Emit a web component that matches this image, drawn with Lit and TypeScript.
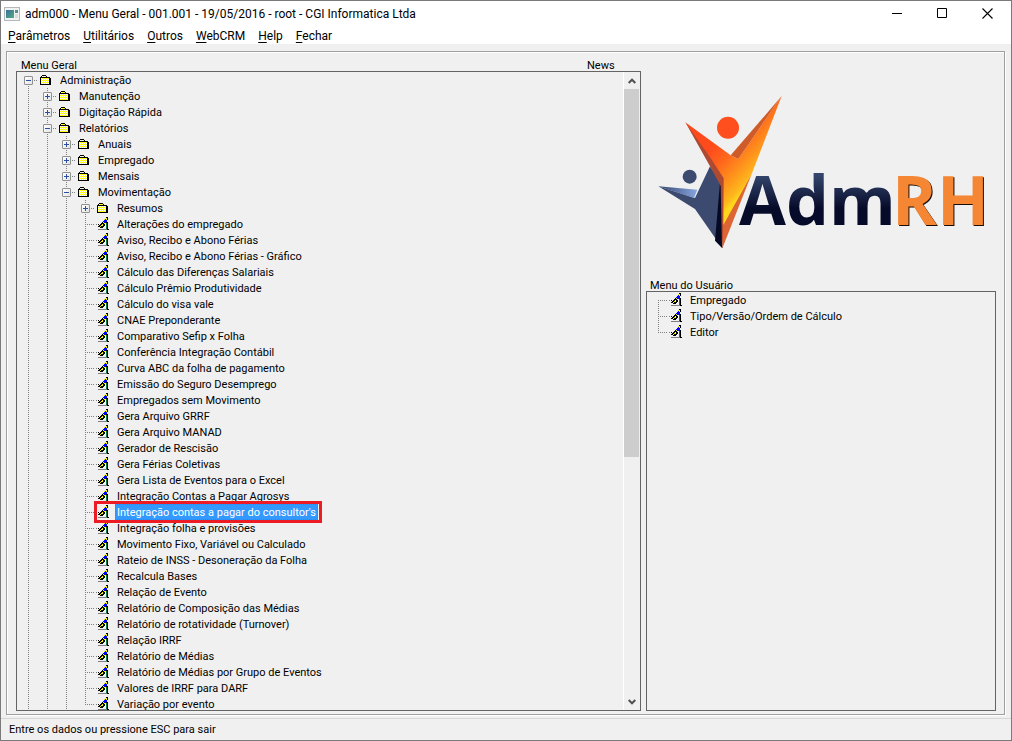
import { LitElement, html, css, svg, nothing } from "lit";
import { customElement, property, state } from "lit/decorators.js";

interface TreeNode {
  label: string;
  kind: "folder" | "program";
  open?: boolean;
  children?: TreeNode[];
  marked?: boolean;
}

interface Row {
  node: TreeNode;
  depth: number;
  first: boolean;
  last: boolean;
  guides: boolean[];
}

const INDENT = 19;

const program = (label: string): TreeNode => ({ label, kind: "program" });
const folder = (label: string, children: TreeNode[] = [], open = false): TreeNode => ({
  label,
  kind: "folder",
  children,
  open,
});

const SELECTED = "Integração contas a pagar do consultor's";

const MAIN_TREE: TreeNode[] = [
  folder(
    "Administração",
    [
      folder("Manutenção"),
      folder("Digitação Rápida"),
      folder(
        "Relatórios",
        [
          folder("Anuais"),
          folder("Empregado"),
          folder("Mensais"),
          folder(
            "Movimentação",
            [
              folder("Resumos"),
              ...[
                "Alterações do empregado",
                "Aviso, Recibo e Abono Férias",
                "Aviso, Recibo e Abono Férias - Gráfico",
                "Cálculo das Diferenças Salariais",
                "Cálculo Prêmio Produtividade",
                "Cálculo do visa vale",
                "CNAE Preponderante",
                "Comparativo Sefip x Folha",
                "Conferência Integração Contábil",
                "Curva ABC da folha de pagamento",
                "Emissão do Seguro Desemprego",
                "Empregados sem Movimento",
                "Gera Arquivo GRRF",
                "Gera Arquivo MANAD",
                "Gerador de Rescisão",
                "Gera Férias Coletivas",
                "Gera Lista de Eventos para o Excel",
                "Integração Contas a Pagar Agrosys",
              ].map(program),
              { label: SELECTED, kind: "program", marked: true },
              ...[
                "Integração folha e provisões",
                "Movimento Fixo, Variável ou Calculado",
                "Rateio de INSS - Desoneração da Folha",
                "Recalcula Bases",
                "Relação de Evento",
                "Relatório de Composição das Médias",
                "Relatório de rotatividade (Turnover)",
                "Relação IRRF",
                "Relatório de Médias",
                "Relatório de Médias por Grupo de Eventos",
                "Valores de IRRF para DARF",
                "Variação por evento",
              ].map(program),
            ],
            true,
          ),
        ],
        true,
      ),
    ],
    true,
  ),
];

const USER_TREE: TreeNode[] = ["Empregado", "Tipo/Versão/Ordem de Cálculo", "Editor"].map(program);

const PALETTE: Record<string, string> = {
  K: "#000000",
  Y: "#ffff00",
  W: "#ffffff",
  B: "#0000ff",
  G: "#008040",
  g: "#808080",
};

const RUNNER = [
  "........KK.",
  ".......YYK.",
  "......YBYK.",
  "......BBB..",
  ".....BBBB..",
  "....KYBBKK.",
  "...KKKYWGK.",
  "K.KKYKKWGK.",
  ".KKYYKKWGK.",
  "KKYKKKW.GK.",
  "..KKK...GK.",
  "........GK.",
  "gggggggggKK",
];

const FOLDER = [
  "..KKKK.....",
  ".KWYWYK....",
  "KKKKKKKKKK.",
  "KWYWYWYWYKK",
  "KYWYWYWYWKK",
  "KWYWYWYWYKK",
  "KYWYWYWYWKK",
  "KWYWYWYWYKK",
  "KYWYWYWYWKK",
  "KKKKKKKKKKK",
];

const pixels = (rows: string[]) =>
  rows.flatMap((row, y) =>
    [...row].map((c, x) =>
      c === "." ? nothing : svg`<rect x=${x} y=${y} width="1" height="1" fill=${PALETTE[c]}></rect>`,
    ),
  );

const runnerIcon = html`<svg width="11" height="13" viewBox="0 0 11 13" shape-rendering="crispEdges" aria-hidden="true">${pixels(RUNNER)}</svg>`;
const folderIcon = html`<svg width="11" height="10" viewBox="0 0 11 10" shape-rendering="crispEdges" aria-hidden="true">${pixels(FOLDER)}</svg>`;

@customElement("menu-tree")
export class MenuTree extends LitElement {
  @property({ attribute: false }) nodes: TreeNode[] = [];
  @property() label = "";
  @property() selected = "";
  @property({ type: Boolean }) compact = false;

  static styles = css`
    :host {
      display: block;
      font: 11px/16px Roboto, "Liberation Sans", Arial, sans-serif;
      color: #000;
    }
    .tree {
      padding-left: 2px;
    }
    .row {
      display: flex;
      height: 16px;
      width: max-content;
    }
    .cell {
      flex: none;
      width: 19px;
      height: 16px;
      display: flex;
      align-items: center;
      justify-content: center;
    }
    .guide {
      background: repeating-linear-gradient(#808080 0 1px, transparent 1px 2px) 9px 0 / 1px 100% no-repeat;
    }
    .joint {
      background:
        repeating-linear-gradient(#808080 0 1px, transparent 1px 2px) 9px 0 / 1px 100% no-repeat,
        repeating-linear-gradient(90deg, #808080 0 1px, transparent 1px 2px) 9px 8px / 10px 1px no-repeat;
    }
    .joint.last {
      background-size: 1px 8px, 10px 1px;
    }
    .joint.first {
      background-position: 9px 8px, 9px 8px;
    }
    button {
      font: inherit;
      color: inherit;
      border: 0;
      padding: 0;
      margin: 0;
      background: none;
    }
    .toggle {
      width: 9px;
      height: 9px;
      background: linear-gradient(135deg, #fff, #e4e4e4);
      border: 1px solid #919191;
      border-radius: 1px;
      display: grid;
      place-items: center;
      margin-top: 1px;
    }
    .toggle svg {
      display: block;
    }
    .icon {
      padding-right: 4px;
      width: 15px;
    }
    .icon.program {
      box-sizing: border-box;
      width: 19px;
      padding: 1px 0 0 3px;
      align-items: flex-start;
      justify-content: flex-start;
      background: linear-gradient(#808080, #808080) 1px 8px / 1px 1px no-repeat;
    }
    .text {
      box-sizing: border-box;
      height: 16px;
      line-height: 14px;
      white-space: nowrap;
      padding: 2px 2px 0;
      margin-left: 1px;
    }
    .text:focus-visible {
      outline: 1px dotted #000;
    }
    .text.selected {
      background: #3399ff;
      color: #fff;
      outline: 1px dotted #cc6600;
      outline-offset: -1px;
    }
    .marked {
      position: relative;
    }
    .mark {
      position: absolute;
      inset: -3px -4px -3px auto;
      border: 3px solid #ed1c24;
      pointer-events: none;
    }
  `;

  private rows(nodes: TreeNode[], depth = 0, guides: boolean[] = []): Row[] {
    return nodes.flatMap((node, i) => {
      const last = i === nodes.length - 1 && (this.compact || depth > 2);
      const row: Row = { node, depth, first: depth === 0 && i === 0, last, guides };
      return node.open && node.children?.length
        ? [row, ...this.rows(node.children, depth + 1, [...guides, !last])]
        : [row];
    });
  }

  private toggle(node: TreeNode) {
    node.open = !node.open;
    this.requestUpdate();
  }

  private renderRow({ node, depth, first, last, guides }: Row) {
    const isFolder = node.kind === "folder";
    const selected = node.label === this.selected;
    return html`<div
      class="row ${node.marked ? "marked" : ""}"
      role="treeitem"
      aria-level=${depth + 1}
      aria-selected=${selected}
      aria-expanded=${isFolder ? String(!!node.open) : nothing}
    >
      ${guides.map((on) => html`<span class="cell ${on ? "guide" : ""}"></span>`)}
      <span class="cell joint ${first ? "first" : ""} ${last ? "last" : ""}">
        ${isFolder
          ? html`<button class="toggle" aria-label="${node.open ? "Recolher" : "Expandir"} ${node.label}" @click=${() => this.toggle(node)}>
              <svg width="5" height="5" viewBox="0 0 5 5" shape-rendering="crispEdges">
                <path d=${node.open ? "M0 2h5v1H0z" : "M0 2h5v1H0zM2 0h1v5H2z"} fill="#2b4fa5"></path>
              </svg>
            </button>`
          : nothing}
      </span>
      <span class="cell icon ${node.kind}">${isFolder ? folderIcon : runnerIcon}</span>
      <button class="text ${node.kind} ${selected ? "selected" : ""}" @click=${() => (this.selected = node.label)}>${node.label}</button>
      ${node.marked ? html`<span class="mark" style="left:${(guides.length + 1) * INDENT - 1}px"></span>` : nothing}
    </div>`;
  }

  render() {
    return html`<div class="tree" role="tree" aria-label=${this.label}>
      ${this.rows(this.nodes).map((r) => this.renderRow(r))}
    </div>`;
  }
}

const logo = html`<svg class="logo" viewBox="0 0 1116 540" role="img" aria-label="AdmRH">
  <defs>
    <linearGradient id="flame" gradientUnits="userSpaceOnUse" x1="200" y1="220" x2="320" y2="330">
      <stop offset="0" stop-color="#ff4a1c"></stop>
      <stop offset="0.35" stop-color="#ff6a1c"></stop>
      <stop offset="0.7" stop-color="#ff9a1c"></stop>
      <stop offset="0.9" stop-color="#ffb81c"></stop>
      <stop offset="1" stop-color="#ffd81c"></stop>
    </linearGradient>
    <linearGradient id="navy" x1="0" y1="0" x2="0" y2="1">
      <stop offset="0.25" stop-color="#33456b"></stop>
      <stop offset="0.6" stop-color="#070b2a"></stop>
    </linearGradient>
    <linearGradient id="wing" x1="0" y1="0" x2="1" y2="0">
      <stop offset="0" stop-color="#33456b"></stop>
      <stop offset="1" stop-color="#88a6e0"></stop>
    </linearGradient>
  </defs>
  <path d="M55 322 165 357 210 262 242 310 247 508 165 390Z" fill="#3b4a6e"></path>
  <path d="M55 322 172 332 162 357Z" fill="url(#wing)"></path>
  <path d="M240 312 249 340 247 508 225 485Z" fill="#050923"></path>
  <circle cx="149" cy="293" r="21" fill="#3b4a6e"></circle>
  <path d="M136 130 210 262 242 320 246 506 256 430 256 290 220 225Z" fill="#ae4a32"></path>
  <path d="M335 285 247 508 250 430Z" fill="#dd6534"></path>
  <path d="M136 130 272 229 295 240 425 51 335 285 250 438 251 298 214 240Z" fill="url(#flame)"></path>
  <path d="M272 229 425 51 295 240Z" fill="#cf5c28"></path>
  <circle cx="264" cy="146" r="33" fill="#ff4f1f"></circle>
  <text class="word" x="297" y="439" fill="url(#navy)">Adm</text>
  <text class="word warm" x="756" y="439" fill="#f58634">RH</text>
</svg>`;

@customElement("app-root")
export class AppRoot extends LitElement {
  @state() private menus = ["Parâmetros", "Utilitários", "Outros", "WebCRM", "Help", "Fechar"];

  static styles = css`
    :host {
      display: flex;
      flex-direction: column;
      box-sizing: border-box;
      height: 100vh;
      border: 1px solid #7a7a7a;
      background: #f0f0f0;
      color: #000;
      font: 11px/16px Roboto, "Liberation Sans", Arial, sans-serif;
      overflow: hidden;
    }
    button {
      font: inherit;
      color: inherit;
      border: 0;
      padding: 0;
      margin: 0;
      background: none;
    }
    .titlebar {
      display: flex;
      align-items: center;
      height: 25px;
      background: #fff;
      padding: 0 1px 0 3px;
      font: 12px/16px Roboto, "Noto Sans", sans-serif;
    }
    .title {
      flex: 1;
      margin: 0 0 0 5px;
      font: inherit;
      white-space: nowrap;
    }
    .caption {
      width: 45px;
      height: 25px;
      display: grid;
      place-items: center;
    }
    .menubar {
      display: flex;
      gap: 13px;
      height: 18px;
      background: #fff;
      padding-left: 7px;
      font: 12px/20px Roboto, "Noto Sans", sans-serif;
    }
    .menubar u {
      text-underline-offset: 2px;
    }
    .frame {
      flex: 1;
      min-height: 0;
      display: flex;
      gap: 5px;
      margin: 7px 6px 3px 5px;
      padding: 5px 8px 3px 9px;
      border: 1px solid #a0a0a0;
      box-shadow: inset 1px 1px #fff, 1px 1px #fff;
    }
    .main {
      flex: 625;
      min-width: 0;
      display: flex;
      flex-direction: column;
    }
    .side {
      flex: 350;
      min-width: 0;
      display: flex;
      flex-direction: column;
    }
    .labels {
      display: grid;
      grid-template-columns: 566px 1fr;
      padding-left: 5px;
      height: 14px;
      line-height: 18px;
    }
    .userlabel {
      padding-left: 4px;
      height: 14px;
      line-height: 18px;
    }
    .box {
      flex: 1;
      min-height: 0;
      display: flex;
      border: 1px solid #646464;
      overflow: hidden;
    }
    .view {
      flex: 1;
      min-width: 0;
      overflow: hidden;
    }
    .scroll {
      width: 16px;
      display: flex;
      flex-direction: column;
      border-left: 1px solid #fff;
    }
    .arrow {
      height: 17px;
      display: grid;
      place-items: center;
    }
    .track {
      flex: 1;
      padding-right: 1px;
    }
    .thumb {
      background: #cdcdcd;
      height: 61%;
    }
    .brand {
      height: 220px;
      display: flex;
      align-items: flex-start;
      justify-content: center;
    }
    .logo {
      width: 372px;
      height: 180px;
      flex: none;
      margin: 22px 0 0 10px;
    }
    .word {
      font-family: "Open Sans", sans-serif;
      font-weight: 700;
      font-size: 204px;
    }
    .warm {
      filter: drop-shadow(3px 3px 0 #1a0d08);
    }
    .status {
      height: 21px;
      border-top: 1px solid #d7d7d7;
      padding-left: 8px;
      line-height: 21px;
    }
  `;

  private scroll(by: number) {
    this.renderRoot.querySelector(".view")?.scrollBy({ top: by });
  }

  render() {
    return html`
      <header class="titlebar">
        <svg width="16" height="14" viewBox="0 0 16 14" aria-hidden="true">
          <defs>
            <linearGradient id="pane" x1="0" y1="0" x2="1" y2="1">
              <stop offset="0" stop-color="#3d6f9e"></stop>
              <stop offset="1" stop-color="#4fae7d"></stop>
            </linearGradient>
          </defs>
          <path d="M0 0h16v14H0z" fill="#b4b8bb"></path>
          <path d="M1 1h14v12H1z" fill="#f0f2f3"></path>
          <path d="M2 3h8v8H2z" fill="url(#pane)"></path>
          <path d="M11 3h3v3h-3z" fill="#5b8f8a"></path>
          <path d="M11 7h3v4h-3z" fill="#dcdcdc"></path>
        </svg>
        <h1 class="title">adm000 - Menu Geral - 001.001 - 19/05/2016 - root - CGI Informatica Ltda</h1>
        <button class="caption" aria-label="Minimizar">
          <svg width="11" height="11" viewBox="0 0 11 11"><path d="M0 5.5h10" stroke="#000"></path></svg>
        </button>
        <button class="caption" aria-label="Maximizar">
          <svg width="11" height="11" viewBox="0 0 11 11"><path d="M.5.5h9v9h-9z" fill="none" stroke="#000"></path></svg>
        </button>
        <button class="caption" aria-label="Fechar janela">
          <svg width="11" height="11" viewBox="0 0 11 11"><path d="M.5.5l10 10M10.5.5l-10 10" stroke="#000" stroke-width="1.1"></path></svg>
        </button>
      </header>
      <nav class="menubar">
        ${this.menus.map((m) => html`<button><u>${m[0]}</u>${m.slice(1)}</button>`)}
      </nav>
      <main class="frame">
        <section class="main">
          <div class="labels"><span>Menu Geral</span><span>News</span></div>
          <div class="box">
            <div class="view">
              <menu-tree label="Menu Geral" .nodes=${MAIN_TREE} selected=${SELECTED}></menu-tree>
            </div>
            <div class="scroll">
              <button class="arrow" aria-label="Rolar para cima" @click=${() => this.scroll(-16)}>
                <svg width="8" height="6" viewBox="0 0 8 6"><path d="M.7 5 4 1.7 7.3 5" fill="none" stroke="#505050" stroke-width="2"></path></svg>
              </button>
              <div class="track"><div class="thumb"></div></div>
              <button class="arrow" aria-label="Rolar para baixo" @click=${() => this.scroll(16)}>
                <svg width="8" height="6" viewBox="0 0 8 6"><path d="M.7 1 4 4.3 7.3 1" fill="none" stroke="#505050" stroke-width="2"></path></svg>
              </button>
            </div>
          </div>
        </section>
        <section class="side">
          <div class="brand">${logo}</div>
          <div class="userlabel">Menu do Usuário</div>
          <div class="box">
            <menu-tree label="Menu do Usuário" compact .nodes=${USER_TREE}></menu-tree>
          </div>
        </section>
      </main>
      <footer class="status">Entre os dados ou pressione ESC para sair</footer>
    `;
  }
}
